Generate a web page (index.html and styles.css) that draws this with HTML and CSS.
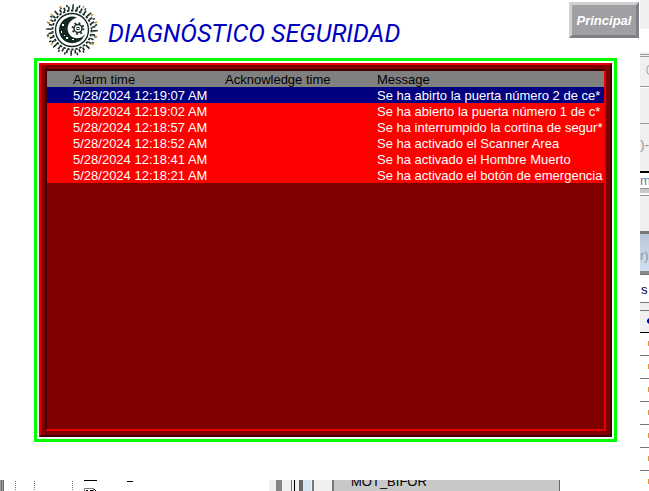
FILE: index.html
```html
<!DOCTYPE html>
<html lang="es">
<head>
<meta charset="utf-8">
<title>Diagnóstico Seguridad</title>
<link rel="stylesheet" href="styles.css">
</head>
<body>
<main class="screen">
  <header class="header">
    <svg class="logo" viewBox="0 0 60 60" aria-hidden="true">
      <g fill="none" stroke="#142823">
        <circle cx="30" cy="30" r="16.5" stroke-width="1.4"/>
        <circle cx="30" cy="30" r="19.5" stroke-width="1.8" stroke-dasharray="2.4 1.7"/>
        <circle cx="30" cy="30" r="22" stroke-width="3.4" stroke-dasharray="1.6 2.7"/>
        <circle cx="30" cy="30" r="24.5" stroke-width="2.4" stroke-dasharray="1.4 5"/>
      </g>
      <path fill="#142823" d="M35 17.5A13.3 13.3 0 1 0 43 34C40 39 32 40 28 35C23 29 26 20 35 17.5Z"/>
      <g fill="none" stroke="#142823">
        <circle cx="36" cy="28.5" r="4" stroke-width="1.5"/>
        <circle cx="36" cy="28.5" r="5.5" stroke-width="1.8" stroke-dasharray="1.8 2.52"/>
        <rect x="35" y="27.5" width="2" height="2"/>
      </g>
      <path fill="#fff" d="M20 24h2v2h-2zM19 31h1v2h-1zM24 37h2v2h-2zM30 39h2v1h-2zM22 35h1v1h-1z"/>
      <path stroke="#c89648" stroke-width="1.5" d="M18 6l1 2M42 6l-1 2M9 14l2 2M51 14l-2 2M5 22l2 1M55 22l-2 1M5 37l2-1M55 37l-2-1M9 45l2-2M51 45l-2-2"/>
    </svg>
    <h1 class="title">DIAGNÓSTICO SEGURIDAD</h1>
    <button class="principal" type="button">Principal</button>
  </header>
  <section class="frame">
    <div class="panel">
      <div class="viewport">
        <table class="alarms">
          <thead>
            <tr><th class="time">Alarm time</th><th class="ack">Acknowledge time</th><th>Message</th></tr>
          </thead>
          <tbody>
            <tr class="selected"><td>5/28/2024 12:19:07 AM</td><td></td><td>Se ha abirto la puerta número 2 de ce*</td></tr>
            <tr><td>5/28/2024 12:19:02 AM</td><td></td><td>Se ha abierto la puerta número 1 de c*</td></tr>
            <tr><td>5/28/2024 12:18:57 AM</td><td></td><td>Se ha interrumpido la cortina de segur*</td></tr>
            <tr><td>5/28/2024 12:18:52 AM</td><td></td><td>Se ha activado el Scanner Area</td></tr>
            <tr><td>5/28/2024 12:18:41 AM</td><td></td><td>Se ha activado el Hombre Muerto</td></tr>
            <tr><td>5/28/2024 12:18:21 AM</td><td></td><td>Se ha activado el botón de emergencia</td></tr>
          </tbody>
        </table>
      </div>
    </div>
  </section>
</main>
<aside class="side">
  <div class="s-top"></div>
  <div class="s-gap"></div>
  <div class="s-rule"></div>
  <div class="s-box"><svg class="glyph" viewBox="0 0 9 12"><path d="M9 2H8L7 4V8L8 10H9" fill="none" stroke="#999"/></svg></div>
  <div class="s-cell"></div>
  <div class="s-coil">u)-</div>
  <div class="s-name">m</div>
  <div class="s-bar"></div>
  <div class="s-plain"></div>
  <div class="s-blue">r)</div>
  <div class="s-tab">s</div>
  <div class="s-thin"></div>
  <div class="s-arrow"><svg class="glyph" viewBox="0 0 9 12"><path d="M9 3L7 5V7L9 9Z" fill="#0000c0"/></svg></div>
  <div class="s-item"></div>
  <div class="s-item"></div>
  <div class="s-item"></div>
  <div class="s-item"></div>
  <div class="s-item"></div>
  <div class="s-item"></div>
  <div class="s-item"></div>
</aside>
<footer class="below">
  <svg class="tree" viewBox="0 0 269 11" aria-hidden="true">
    <path fill="#a0a0a0" d="M0 0h4v11h-4z"/>
    <path stroke="#666" d="M1.5 0v11M3.5 0v11"/>
    <path stroke="#777" stroke-dasharray="1 1" d="M15.5 1v10M34.5 1v10M72.5 1v10"/>
    <path fill="#000" d="M84 0h13v1h-13zM127 1h6v1h-6z"/>
    <path fill="none" stroke="#777" d="M84.5 11v-2.5h9v2.5"/>
    <path fill="#000" d="M86 10h2v1h-2zM90 10h3v1h-3zM94 9h1v1h-1zM95 10h1v1h-1z"/>
  </svg>
  <svg class="splitter" viewBox="0 0 65 11" aria-hidden="true">
    <path fill="#f0f0f0" d="M0 0h65v11H0z"/>
    <path fill="#858585" d="M7 0h6v11H7z"/>
    <path fill="#777" d="M22 0h1v11h-1zM32 0h1v11h-1zM43 0h2v11h-2zM63 0h2v11h-2z"/>
    <path fill="#000" d="M25 0h1v11h-1z"/>
    <path fill="#1878c8" d="M30 0h1v11h-1z"/>
    <path fill="#666" d="M31 0h3v11h-3z"/>
    <path fill="#d8e6f4" d="M34 0h8v11h-8z"/>
  </svg>
  <div class="tag"><span class="tag-text">MOT_BIFOR</span></div>
</footer>
</body>
</html>
```
FILE: styles.css
```css
* {
  box-sizing: border-box;
}

body {
  margin: 0;
  height: 100vh;
  display: grid;
  grid-template-columns: minmax(0, 1fr) 9px;
  grid-template-rows: minmax(0, 1fr) 11px;
  overflow: hidden;
  background: #fff;
  font-family: "Liberation Sans", Arial, sans-serif;
  font-size: 13px;
}

.screen {
  display: flex;
  flex-direction: column;
  padding-bottom: 38px;
}

.header {
  height: 58px;
  display: flex;
  align-items: flex-start;
  padding-left: 42px;
}

.logo {
  width: 60px;
  height: 60px;
}

.title {
  margin: 18px auto 0 6px;
  font: italic 400 25px/32px Roboto, sans-serif;
  color: #0000c0;
  white-space: nowrap;
}

.principal {
  width: 70px;
  height: 36px;
  margin: 2px 1px 0 0;
  padding: 2px 0 0;
  border: 3px solid;
  border-color: #d0d0d0 #808088 #808088 #d0d0d0;
  background: #a0a0a4;
  color: #fff;
  font: italic bold 13px/16px "Liberation Sans", Arial, sans-serif;
}

.frame {
  flex: 1;
  display: flex;
  margin: 0 23px 0 34px;
  border: 3px solid #0f0;
  padding: 2px;
}

.panel {
  flex: 1;
  display: flex;
  min-width: 0;
  padding: 4px;
  border: 2px solid;
  border-color: #e60000 #400000 #400000 #e60000;
  background: #800000;
}

.viewport {
  flex: 1;
  min-width: 0;
  overflow: hidden;
  border: 2px solid;
  border-color: #400000 #e60000 #e60000 #400000;
}

.alarms {
  width: 100%;
  table-layout: fixed;
  border-collapse: collapse;
  line-height: 15px;
  white-space: nowrap;
  background: #f00;
  color: #fff;
}

.alarms thead {
  background: #808080;
  color: #000;
}

.alarms th,
.alarms td {
  padding: 1px 0 0;
  font-weight: 400;
  text-align: left;
}

.alarms th:first-child,
.alarms td:first-child {
  padding-left: 26px;
}

.time {
  width: 178px;
}

.ack {
  width: 152px;
}

.selected {
  background: #000080;
}

.side {
  grid-column: 2;
  grid-row: 1 / 3;
  overflow: hidden;
  background: #fff;
  white-space: nowrap;
}

.glyph {
  display: block;
  width: 9px;
  height: 12px;
}

.s-top {
  height: 29px;
  background: #f0f0f0;
}

.s-gap {
  height: 23px;
}

.s-rule {
  height: 5px;
  border-top: 2px solid #f0f0f0;
  border-bottom: 1px solid #999;
  background: linear-gradient(#999 1px, #f0f0f0 1px);
}

.s-box {
  height: 30px;
  padding-top: 7px;
  border-bottom: 1px solid #999;
  background: #f0f0f0;
}

.s-cell {
  height: 37px;
  border-top: 1px solid #fff;
  border-bottom: 1px solid #999;
  background: #f0f0f0;
}

.s-coil {
  display: flex;
  justify-content: flex-end;
  height: 49px;
  padding-top: 13px;
  border-bottom: 2px solid #000;
  background: #f0f0f0;
  color: #909090;
  line-height: 16px;
}

.s-name {
  height: 15px;
  color: #6082a8;
  line-height: 15px;
}

.s-bar {
  height: 8px;
  border-top: 1px solid #999;
  border-bottom: 1px solid #999;
  background: linear-gradient(#c8c8c8 4px, #fff 4px);
}

.s-plain {
  height: 35px;
  background: #f0f0f0;
}

.s-blue {
  height: 43px;
  padding-top: 14px;
  border-top: 3px solid #777;
  border-bottom: 3px solid #888;
  background: linear-gradient(#b8c8d8, #d0e0f0);
  color: #9098a0;
  line-height: 16px;
}

.s-tab {
  height: 29px;
  padding: 7px 0 0 1px;
  border-top: 1px solid #777;
  border-bottom: 1px solid #777;
  color: #000040;
  line-height: 16px;
}

.s-thin {
  height: 8px;
  border-bottom: 1px solid #777;
  background: #f0f0f0;
}

.s-arrow {
  height: 22px;
  padding-top: 4px;
  border-bottom: 1px solid #000;
  background: #f0f0f0;
}

.s-item {
  height: 23px;
  border-bottom: 1px solid #777;
  background: linear-gradient(#e0963c, #e0963c) right 8px / 1px 5px no-repeat;
}

.below {
  display: flex;
  overflow: hidden;
}

.tree {
  width: 269px;
  height: 11px;
}

.splitter {
  width: 65px;
  height: 11px;
}

.tag {
  display: flex;
  align-items: flex-end;
  width: 226px;
  padding: 0 0 2px 17px;
  border-right: 1px solid #666;
  background: #c8c8c8;
  overflow: hidden;
}

.tag-text {
  line-height: 15px;
}
```
